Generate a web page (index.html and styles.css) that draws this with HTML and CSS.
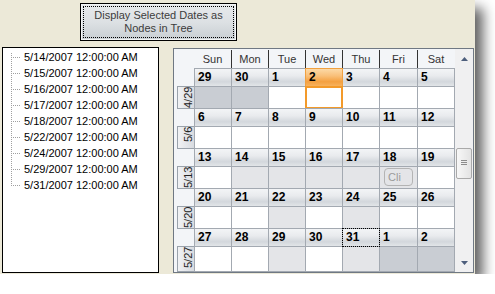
FILE: index.html
```html
<!DOCTYPE html>
<html>
<head>
<meta charset="utf-8">
<link rel="stylesheet" href="styles.css">
</head>
<body>
<div class="window">
  <div class="toolbar">
    <button class="btn">Display Selected Dates as<br>Nodes in Tree</button>
  </div>
  <div class="main">
    <ul class="tree">
      <li class="node first"><span class="conn"></span><span class="text">5/14/2007 12:00:00 AM</span></li>
      <li class="node"><span class="conn"></span><span class="text">5/15/2007 12:00:00 AM</span></li>
      <li class="node"><span class="conn"></span><span class="text">5/16/2007 12:00:00 AM</span></li>
      <li class="node"><span class="conn"></span><span class="text">5/17/2007 12:00:00 AM</span></li>
      <li class="node"><span class="conn"></span><span class="text">5/18/2007 12:00:00 AM</span></li>
      <li class="node"><span class="conn"></span><span class="text">5/22/2007 12:00:00 AM</span></li>
      <li class="node"><span class="conn"></span><span class="text">5/24/2007 12:00:00 AM</span></li>
      <li class="node"><span class="conn"></span><span class="text">5/29/2007 12:00:00 AM</span></li>
      <li class="node last"><span class="conn"></span><span class="text">5/31/2007 12:00:00 AM</span></li>
    </ul>
    <div class="cal">
      <div class="cal-body">
        <div class="cal-head">
          <div class="dow-row">
            <span class="dow">Sun</span><span class="dow">Mon</span><span class="dow">Tue</span><span class="dow">Wed</span><span class="dow">Thu</span><span class="dow">Fri</span><span class="dow">Sat</span>
          </div>
        </div>
        <div class="week">
          <div class="wkcol"><div class="wklabel"><span>4/29</span></div></div>
          <div class="days">
            <div class="num">29</div><div class="num">30</div><div class="num">1</div><div class="num today">2</div><div class="num">3</div><div class="num">4</div><div class="num">5</div>
            <div class="cell other"></div><div class="cell other"></div><div class="cell"></div><div class="cell today"></div><div class="cell"></div><div class="cell"></div><div class="cell"></div>
          </div>
        </div>
        <div class="week">
          <div class="wkcol"><div class="wklabel"><span>5/6</span></div></div>
          <div class="days">
            <div class="num">6</div><div class="num">7</div><div class="num">8</div><div class="num">9</div><div class="num">10</div><div class="num">11</div><div class="num">12</div>
            <div class="cell"></div><div class="cell"></div><div class="cell"></div><div class="cell"></div><div class="cell"></div><div class="cell"></div><div class="cell"></div>
          </div>
        </div>
        <div class="week">
          <div class="wkcol"><div class="wklabel"><span>5/13</span></div></div>
          <div class="days">
            <div class="num">13</div><div class="num">14</div><div class="num">15</div><div class="num">16</div><div class="num">17</div><div class="num">18</div><div class="num">19</div>
            <div class="cell"></div><div class="cell sel"></div><div class="cell sel"></div><div class="cell sel"></div><div class="cell sel"></div><div class="cell sel"><span class="cellbtn">Cli</span></div><div class="cell"></div>
          </div>
        </div>
        <div class="week">
          <div class="wkcol"><div class="wklabel"><span>5/20</span></div></div>
          <div class="days">
            <div class="num">20</div><div class="num">21</div><div class="num">22</div><div class="num">23</div><div class="num">24</div><div class="num">25</div><div class="num">26</div>
            <div class="cell"></div><div class="cell"></div><div class="cell sel"></div><div class="cell"></div><div class="cell sel"></div><div class="cell"></div><div class="cell"></div>
          </div>
        </div>
        <div class="week last">
          <div class="wkcol"><div class="wklabel"><span>5/27</span></div></div>
          <div class="days">
            <div class="num">27</div><div class="num">28</div><div class="num">29</div><div class="num">30</div><div class="num focus">31</div><div class="num">1</div><div class="num">2</div>
            <div class="cell"></div><div class="cell"></div><div class="cell sel"></div><div class="cell"></div><div class="cell sel"></div><div class="cell other"></div><div class="cell other"></div>
          </div>
        </div>
      </div>
      <div class="vscroll">
        <div class="sb-up"><svg width="7" height="4" viewBox="0 0 7 4"><path d="M0 4H7L3.5 0Z" fill="#4d5e7c"/></svg></div>
        <div class="sb-track"><div class="sb-thumb"><div class="grip"></div></div></div>
        <div class="sb-down"><svg width="7" height="4" viewBox="0 0 7 4"><path d="M0 0H7L3.5 4Z" fill="#4d5e7c"/></svg></div>
      </div>
    </div>
  </div>
</div>
</body>
</html>
```
FILE: styles.css
```css
* { box-sizing: border-box; margin: 0; padding: 0; }
html, body { background: #ffffff; }
body {
  margin: 0;
  font-family: "Liberation Sans", Arial, sans-serif;
  font-size: 11px;
  color: #000;
}
.window {
  width: 475px;
  height: 274px;
  background: #ece9d8;
  box-shadow: 8px 8px 12px rgba(0, 0, 0, 0.62);
  display: flex;
  flex-direction: column;
}
.toolbar {
  height: 47px;
  padding: 3px 0 0 80px;
}
.btn {
  appearance: none;
  display: block;
  width: 157px;
  height: 38px;
  border: 1px solid #000;
  background: linear-gradient(to bottom, #e7eaec 0%, #dde1e4 50%, #c8ced2 100%);
  box-shadow: inset 0 0 0 1px #f3f5f6;
  color: #3c3c3c;
  font-family: "Liberation Sans", Arial, sans-serif;
  font-size: 11px;
  line-height: 13px;
  text-align: center;
  outline: 1px dotted #000;
  outline-offset: -4px;
}
.main {
  display: flex;
  align-items: flex-start;
  padding-left: 2px;
}
.tree {
  list-style: none;
  width: 157px;
  height: 226px;
  border: 1px solid #000;
  background: #fff;
  padding-top: 1px;
}
.node {
  display: flex;
  height: 16px;
  line-height: 16px;
  white-space: nowrap;
}
.conn {
  width: 11px;
  margin-left: 8px;
  margin-right: 2px;
  background:
    repeating-linear-gradient(to bottom, #a0a0a0 0 1px, transparent 1px 2px) 0 0 / 1px 100% no-repeat,
    repeating-linear-gradient(to right, #a0a0a0 0 1px, transparent 1px 2px) 0 8px / 10px 1px no-repeat;
}
.node.first .conn {
  background:
    repeating-linear-gradient(to bottom, #a0a0a0 0 1px, transparent 1px 2px) 0 4px / 1px 12px no-repeat,
    repeating-linear-gradient(to right, #a0a0a0 0 1px, transparent 1px 2px) 0 8px / 10px 1px no-repeat;
}
.node.last .conn {
  background:
    repeating-linear-gradient(to bottom, #a0a0a0 0 1px, transparent 1px 2px) 0 0 / 1px 9px no-repeat,
    repeating-linear-gradient(to right, #a0a0a0 0 1px, transparent 1px 2px) 0 8px / 10px 1px no-repeat;
}
.cal {
  margin-left: 14px;
  margin-top: 1px;
  width: 301px;
  height: 225px;
  border: 1px solid #6f7883;
  background: #f3f5f8;
  display: flex;
}
.cal-body {
  width: 281px;
}
.cal-head {
  height: 19px;
  padding-left: 20px;
}
.dow-row {
  display: grid;
  grid-template-columns: 37px 37px 37px 37px 37px 38px 37px;
}
.dow {
  margin-top: 1px;
  height: 18px;
  line-height: 18px;
  text-align: center;
  color: #333;
}
.dow + .dow {
  border-left: 1px solid #333;
}
.week {
  display: flex;
  height: 40px;
}
.week.last {
  height: 44px;
}
.wkcol {
  width: 20px;
  padding-top: 18px;
  padding-left: 3px;
}
.wklabel {
  width: 17px;
  height: 23px;
  border: 1px solid #9aa2ab;
  border-right: 0;
  background: linear-gradient(to right, #f1f2f4, #d8dbe0);
  overflow: hidden;
  display: flex;
  justify-content: flex-end;
}
.last .wklabel {
  height: 26px;
}
.wklabel span {
  writing-mode: vertical-rl;
  transform: rotate(180deg);
  text-align: end;
  font-size: 11px;
  line-height: 12px;
  color: #222;
  white-space: nowrap;
}
.days {
  display: grid;
  width: 261px;
  grid-template-columns: 36px 36px 36px 36px 36px 37px 36px;
  grid-template-rows: 17px 21px;
  gap: 1px;
  padding: 1px 1px 0 1px;
  background: #a3a9b1;
}
.last .days {
  grid-template-rows: 17px 24px;
  padding-bottom: 1px;
}
.num {
  background: linear-gradient(to bottom, #f3f4f6 0%, #e9ebee 40%, #d3d7dc 75%, #e2e5e8 100%);
  font-weight: bold;
  font-size: 12px;
  line-height: 17px;
  padding-left: 3px;
  color: #000;
}
.num.today {
  background: linear-gradient(to bottom, #fcd9a6 0%, #f9c07a 40%, #f4a040 75%, #f7b25e 100%);
  outline: 1px solid #f0a040;
}
.num.focus {
  outline: 1px dotted #000;
}
.cell {
  background: #fff;
}
.cell.sel {
  background: #e4e5e8;
}
.cell.other {
  background: #c9cdd3;
}
.cell.today {
  box-shadow: inset 0 0 0 1px #f39a2a;
  outline: 1px solid #f39a2a;
}
.cellbtn {
  display: block;
  margin: 1px 0 0 4px;
  width: 29px;
  height: 18px;
  border: 1px solid #b4b4b4;
  border-radius: 4px;
  color: #9a9a9a;
  font-size: 11px;
  line-height: 16px;
  padding-left: 3px;
  overflow: hidden;
}
.vscroll {
  width: 18px;
  display: flex;
  flex-direction: column;
  background: #f0f0f1;
}
.sb-up {
  height: 17px;
  padding-top: 8px;
  display: flex;
  justify-content: center;
}
.sb-up svg, .sb-down svg { display: block; }
.sb-track {
  flex: 1;
  padding-top: 82px;
}
.sb-thumb {
  width: 16px;
  height: 31px;
  margin-left: 1px;
  border: 1px solid #a9a9a9;
  border-radius: 2px;
  background: linear-gradient(to right, #f7f7f7, #e3e3e3);
  display: flex;
  justify-content: center;
  padding-top: 11px;
}
.grip {
  width: 6px;
  height: 5px;
  background: repeating-linear-gradient(to bottom, #8c8c8c 0 1px, transparent 1px 2px);
}
.sb-down {
  height: 17px;
  padding-top: 6px;
  display: flex;
  justify-content: center;
}
```
